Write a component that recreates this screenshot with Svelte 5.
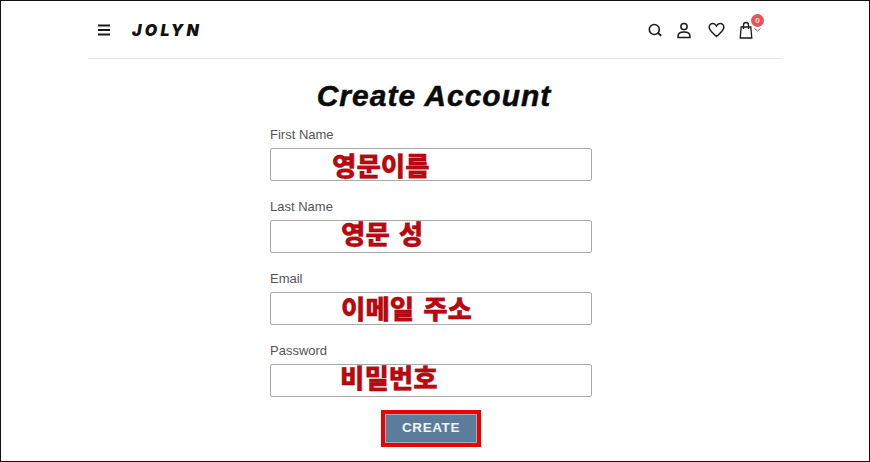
<script>
  const fields = [
    { label: 'First Name', note: '영문이름', pad: 61, shift: 0 },
    { label: 'Last Name', note: '영문 성', pad: 70, shift: -4 },
    { label: 'Email', note: '이메일 주소', pad: 70, shift: -1 },
    { label: 'Password', note: '비밀번호', pad: 69, shift: -4 }
  ];
</script>

<div class="page">
  <header class="top">
    <div class="brand">
      <svg class="menu" width="14" height="12" viewBox="0 0 14 12" aria-hidden="true">
        <path d="M1 1.500h12M1 6h12M1 10.500h12" stroke="#1a1a1a" stroke-width="1.800" fill="none" />
      </svg>
      <span class="logo">JOLYN</span>
    </div>
    <div class="icons">
      <svg width="16" height="16" viewBox="0 0 16 16" aria-hidden="true">
        <circle cx="7.300" cy="7.500" r="5" fill="none" stroke="#1a1a1a" stroke-width="1.600" />
        <path d="M11 11l3.200 2.800" stroke="#1a1a1a" stroke-width="1.800" fill="none" />
      </svg>
      <svg class="user" width="16" height="17" viewBox="0 0 16 17" aria-hidden="true">
        <circle cx="8" cy="4.600" r="3.100" fill="none" stroke="#1a1a1a" stroke-width="1.500" />
        <path d="M2 15.600h12v-1.400c0-2.600-2.600-4.200-6-4.200s-6 1.600-6 4.200z" fill="none" stroke="#1a1a1a" stroke-width="1.500" />
      </svg>
      <svg width="17" height="16" viewBox="0 0 17 16" aria-hidden="true">
        <path d="M8.500 14.500C4.500 11 1.200 8.500 1.200 5.300 1.200 3.100 2.900 1.600 4.800 1.600c1.600 0 2.900.9 3.700 2.400.8-1.500 2.100-2.400 3.700-2.400 1.900 0 3.600 1.500 3.600 3.700 0 3.200-3.300 5.700-7.300 9.200z" fill="none" stroke="#1a1a1a" stroke-width="1.500" />
      </svg>
      <div class="cart">
        <svg width="14" height="18" viewBox="0 0 14 18" aria-hidden="true">
          <path d="M2.200 6h9.600l1 11H1.200zM4.500 8V4a2.500 2.500 0 0 1 5 0v4" fill="none" stroke="#1a1a1a" stroke-width="1.300" />
        </svg>
        <span class="badge">0</span>
        <svg class="chev" width="7" height="4" viewBox="0 0 7 4" aria-hidden="true">
          <path d="M.5.5l3 2.500 3-2.500" fill="none" stroke="#666" stroke-width="1" />
        </svg>
      </div>
    </div>
  </header>

  <main class="content">
    <h1>Create Account</h1>
    <form class="form">
      {#each fields as field}
        <div class="field">
          <span class="label">{field.label}</span>
          <div class="input">
            <span class="note" style="padding-left: {field.pad}px; top: {field.shift}px">{field.note}</span>
          </div>
        </div>
      {/each}
      <div class="actions">
        <div class="frame">
          <button type="button">CREATE</button>
        </div>
      </div>
    </form>
  </main>
</div>

<style>
  :global(body) {
    margin: 0;
    background: #fff;
  }

  .page {
    box-sizing: border-box;
    width: 870px;
    height: 462px;
    border: 1px solid #111;
    background: #fff;
    overflow: hidden;
    font-family: "Liberation Sans", Arial, sans-serif;
  }

  .top {
    box-sizing: border-box;
    width: 694px;
    height: 58px;
    margin-left: 87px;
    padding: 1px 21px 0 9px;
    border-bottom: 1px solid #e6e6e6;
    display: flex;
    justify-content: space-between;
    align-items: center;
  }

  .brand {
    display: flex;
    align-items: center;
    gap: 21px;
  }

  .menu {
    display: block;
  }

  .logo {
    font-family: Inter, "Liberation Sans", sans-serif;
    font-weight: 900;
    font-style: italic;
    font-size: 16px;
    letter-spacing: 3.300px;
    color: #111;
  }

  .icons {
    display: flex;
    align-items: center;
    gap: 14px;
    padding-right: 8px;
  }

  .icons svg {
    display: block;
  }

  .icons .user {
    margin: 0 2px 0 -1px;
  }

  .cart {
    position: relative;
  }

  .badge {
    position: absolute;
    left: 12px;
    top: -7px;
    width: 13px;
    height: 13px;
    border-radius: 50%;
    background: #e8525a;
    color: #fbdcdc;
    font-size: 8px;
    font-weight: 700;
    line-height: 13px;
    text-align: center;
  }

  .icons .chev {
    position: absolute;
    left: 15px;
    top: 7px;
  }

  .content {
    display: flex;
    flex-direction: column;
    align-items: center;
  }

  h1 {
    margin: 20px 0 0 -2px;
    font-size: 30px;
    line-height: 34px;
    font-weight: 700;
    font-style: italic;
    letter-spacing: 1px;
    color: #0a0a0a;
    -webkit-text-stroke: 0.5px #0a0a0a;
  }

  .form {
    width: 322px;
    margin: 10px 8px 0 0;
    display: flex;
    flex-direction: column;
    gap: 14px;
  }

  .field {
    display: flex;
    flex-direction: column;
    gap: 2px;
  }

  .label {
    font-size: 13px;
    line-height: 23px;
    color: #555;
  }

  .input {
    box-sizing: border-box;
    height: 33px;
    border: 1px solid #a9a9a9;
    border-radius: 2px;
    background: #fff;
  }

  .note {
    position: relative;
    display: block;
    font-family: "Noto Sans CJK KR", sans-serif;
    font-size: 26.500px;
    font-weight: 900;
    word-spacing: 3px;
    line-height: 31px;
    color: #c0060f;
    -webkit-text-stroke: 0.3px #7a0a0a;
  }

  .actions {
    display: flex;
    justify-content: center;
    margin-top: -1px;
  }

  .frame {
    border: 4px solid #ee0000;
  }

  button {
    display: block;
    width: 92px;
    height: 29px;
    padding: 0 0 2px;
    border: 1px solid #a3adb6;
    background: #5b7d9b;
    color: #f1f4f6;
    font-family: "Liberation Sans", Arial, sans-serif;
    font-size: 13.500px;
    font-weight: 700;
    letter-spacing: 0.600px;
  }
</style>
